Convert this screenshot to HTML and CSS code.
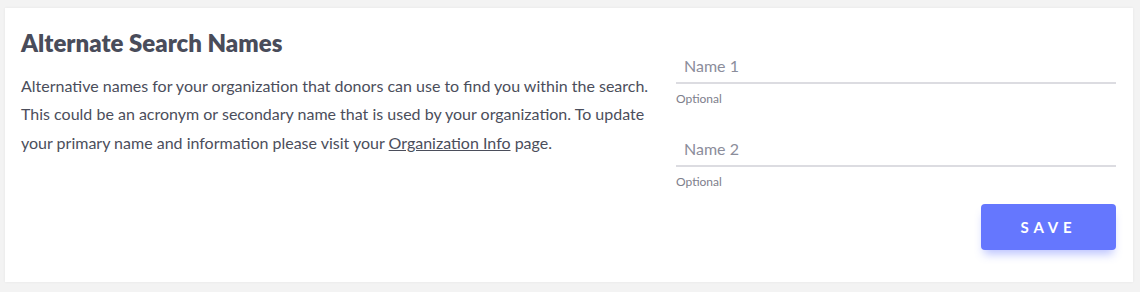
FILE: index.html
```html
<!DOCTYPE html>
<html lang="en">
<head>
<meta charset="utf-8">
<title>Alternate Search Names</title>
<link rel="stylesheet" href="styles.css">
</head>
<body>
<div class="page">
  <section class="card">
    <div class="intro">
      <h2 class="title">Alternate Search Names</h2>
      <p class="desc">Alternative names for your organization that donors can use to find you within the search. This could be an acronym or secondary name that is used by your organization. To update your primary name and information please visit your <a class="link" href="#">Organization Info</a> page.</p>
    </div>
    <form class="fields">
      <div class="field">
        <input class="input" type="text" placeholder="Name 1">
        <div class="hint">Optional</div>
      </div>
      <div class="field">
        <input class="input" type="text" placeholder="Name 2">
        <div class="hint">Optional</div>
      </div>
      <div class="actions">
        <button class="save" type="button">SAVE</button>
      </div>
    </form>
  </section>
</div>
</body>
</html>
```

FILE: styles.css
```css
* { box-sizing: border-box; }
html, body {
  margin: 0;
  background: #f3f3f3;
  font-family: Lato, "Open Sans", sans-serif;
}
.page {
  padding: 8px 7px 10px 5px;
  height: 292px;
}
.card {
  background: #ffffff;
  height: 274px;
  box-shadow: 0 0 3px rgba(0,0,0,0.06);
  display: flex;
  padding: 0 17px 0 16px;
  gap: 21px;
}
.intro {
  width: 634px;
  flex: none;
}
.title {
  margin: 19px 0 0;
  font-size: 24px;
  line-height: 32px;
  font-weight: 800;
  color: #494c5a;
}
.desc {
  margin: 12.5px 0 0;
  font-size: 16px;
  line-height: 28.5px;
  color: #4b4e5b;
}
.link {
  color: #4b4e5b;
  text-decoration: underline;
}
.fields {
  flex: 1;
  display: flex;
  flex-direction: column;
  padding-top: 48px;
}
.field {
  margin-bottom: 33px;
}
.field + .field { margin-bottom: 15px; }
.input {
  display: block;
  width: 100%;
  border: none;
  border-bottom: 2px solid #dcdce1;
  padding: 0 8px 6px;
  font-family: Lato, "Open Sans", sans-serif;
  font-size: 16px;
  line-height: 20px;
  color: #4b4e5b;
  background: transparent;
  outline: none;
}
.input::placeholder { color: #8b8d9b; }
.hint {
  margin-top: 8px;
  font-size: 12px;
  line-height: 14px;
  color: #7e808c;
}
.actions {
  display: flex;
  justify-content: flex-end;
}
.save {
  width: 135px;
  height: 46px;
  border: none;
  border-radius: 4px;
  background: #6577fe;
  color: #ffffff;
  font-family: Lato, "Open Sans", sans-serif;
  font-weight: 700;
  font-size: 15px;
  letter-spacing: 4.8px;
  padding-left: 6px;
  box-shadow: 0 7px 10px -3px rgba(101,119,254,0.45);
  cursor: pointer;
}
```
